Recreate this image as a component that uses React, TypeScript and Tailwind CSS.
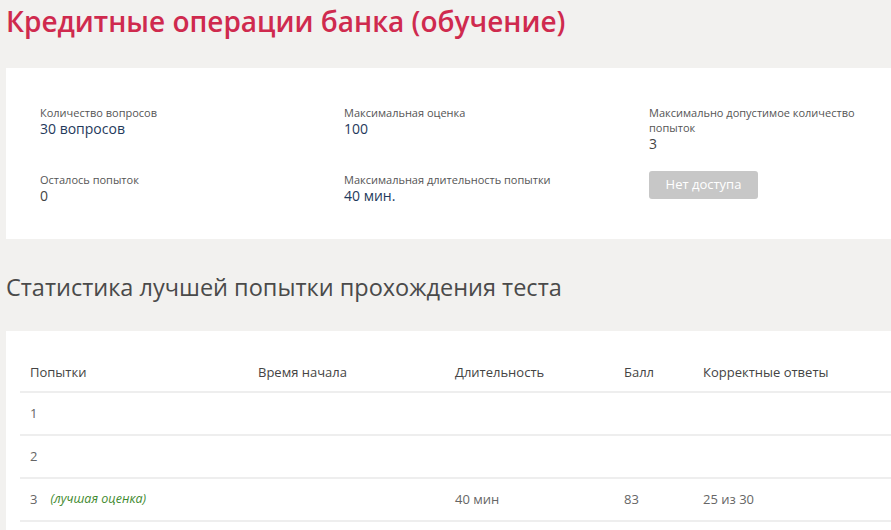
export default function App() {
  const rows = [
    { n: "1", best: false, start: "", dur: "", score: "", correct: "" },
    { n: "2", best: false, start: "", dur: "", score: "", correct: "" },
    { n: "3", best: true, start: "", dur: "40 мин", score: "83", correct: "25 из 30" },
  ];

  return (
    <div
      className="min-h-[530px] bg-[#f2f1ef] pl-[6px] overflow-hidden"
      style={{ fontFamily: '"Open Sans", "Noto Sans", sans-serif' }}
    >
      <h1 className="pt-[1px] text-[28px] leading-[40px] font-semibold text-[#cf2a4e] whitespace-nowrap">
        Кредитные операции банка (обучение)
      </h1>

      <div className="mt-[27px] w-[900px] h-[171px] bg-white pl-[34px] pt-[37px]">
        <div className="grid grid-cols-[304px_305px_230px] gap-y-[20px]">
          <Info label="Количество вопросов" value="30 вопросов" />
          <Info label="Максимальная оценка" value="100" />
          <Info label="Максимально допустимое количество попыток" value="3" plain />
          <Info label="Осталось попыток" value="0" plain />
          <Info label="Максимальная длительность попытки" value="40 мин." />
          <div className="-mt-[1px]">
            <button className="w-[109px] h-[28px] rounded-[3px] bg-[#c7c7c7] text-white text-[13px]">
              Нет доступа
            </button>
          </div>
        </div>
      </div>

      <h2 className="mt-[30px] text-[23.5px] leading-[36px] text-[#4a4a4a] whitespace-nowrap">
        Статистика лучшей попытки прохождения теста
      </h2>

      <div className="mt-[26px] w-[900px] bg-white pl-[14px] pt-[27px] pb-[20px]">
        <div className="grid grid-cols-[228px_197px_169px_79px_1fr] h-[35px] items-center pl-[10px] pb-[3px] border-b-2 border-[#eeeeee] text-[13px] text-[#444]">
          <div>Попытки</div>
          <div>Время начала</div>
          <div>Длительность</div>
          <div>Балл</div>
          <div>Корректные ответы</div>
        </div>
        {rows.map((r) => (
          <div
            key={r.n}
            className="grid grid-cols-[228px_197px_169px_79px_1fr] h-[43px] items-center pl-[10px] border-b-2 border-[#eeeeee] text-[13px] text-[#666]"
          >
            <div className="flex items-center gap-[13px]">
              <span>{r.n}</span>
              {r.best && <span className="italic text-[12.5px] text-[#3f8a2f]">(лучшая оценка)</span>}
            </div>
            <div>{r.start}</div>
            <div>{r.dur}</div>
            <div>{r.score}</div>
            <div>{r.correct}</div>
          </div>
        ))}
      </div>
    </div>
  );
}

function Info({ label, value, plain }: { label: string; value: string; plain?: boolean }) {
  return (
    <div>
      <div className="text-[11px] leading-[15px] text-[#555]">{label}</div>
      <div className={`text-[14px] leading-[17px] ${plain ? "text-[#444]" : "text-[#1f3a5c] font-medium"}`}>
        {value}
      </div>
    </div>
  );
}
